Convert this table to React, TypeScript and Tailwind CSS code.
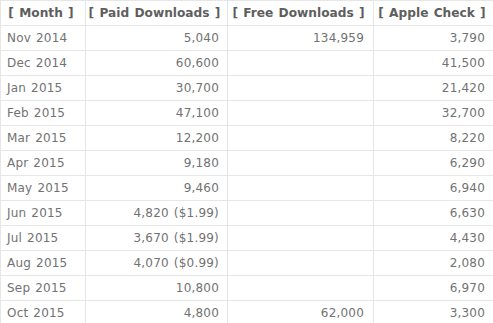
const rows: [string, string, string, string][] = [
  ['Nov 2014', '5,040', '134,959', '3,790'],
  ['Dec 2014', '60,600', '', '41,500'],
  ['Jan 2015', '30,700', '', '21,420'],
  ['Feb 2015', '47,100', '', '32,700'],
  ['Mar 2015', '12,200', '', '8,220'],
  ['Apr 2015', '9,180', '', '6,290'],
  ['May 2015', '9,460', '', '6,940'],
  ['Jun 2015', '4,820 ($1.99)', '', '6,630'],
  ['Jul 2015', '3,670 ($1.99)', '', '4,430'],
  ['Aug 2015', '4,070 ($0.99)', '', '2,080'],
  ['Sep 2015', '10,800', '', '6,970'],
  ['Oct 2015', '4,800', '62,000', '3,300'],
];

const headers = ['[ Month ]', '[ Paid Downloads ]', '[ Free Downloads ]', '[ Apple Check ]'];

export default function App() {
  return (
    <div className="w-[493px] h-[323px] overflow-hidden bg-white font-['DejaVu_Sans',Verdana,sans-serif] text-[12px] tracking-[0.2px] [word-spacing:1px] text-[#727272]">
      <table className="w-[494px] border-collapse table-fixed">
        <colgroup>
          <col className="w-[85px]" />
          <col className="w-[142px]" />
          <col className="w-[146px]" />
          <col className="w-[121px]" />
        </colgroup>
        <thead>
          <tr>
            {headers.map((h) => (
              <th
                key={h}
                className="h-[25px] border border-[#e6e6e6] pr-[4px] text-center text-[12.2px] tracking-normal [word-spacing:1px] font-bold text-[#5e5e5e] whitespace-nowrap"
              >
                {h}
              </th>
            ))}
          </tr>
        </thead>
        <tbody>
          {rows.map((r) => (
            <tr key={r[0]}>
              <td className="h-[25px] border border-[#e6e6e6] pl-[6px] text-left whitespace-nowrap">{r[0]}</td>
              <td className="h-[25px] border border-[#e6e6e6] pr-[8px] text-right whitespace-nowrap">{r[1]}</td>
              <td className="h-[25px] border border-[#e6e6e6] pr-[9px] text-right whitespace-nowrap">{r[2]}</td>
              <td className="h-[25px] border border-[#e6e6e6] pr-[9px] text-right whitespace-nowrap">{r[3]}</td>
            </tr>
          ))}
        </tbody>
      </table>
    </div>
  );
}
